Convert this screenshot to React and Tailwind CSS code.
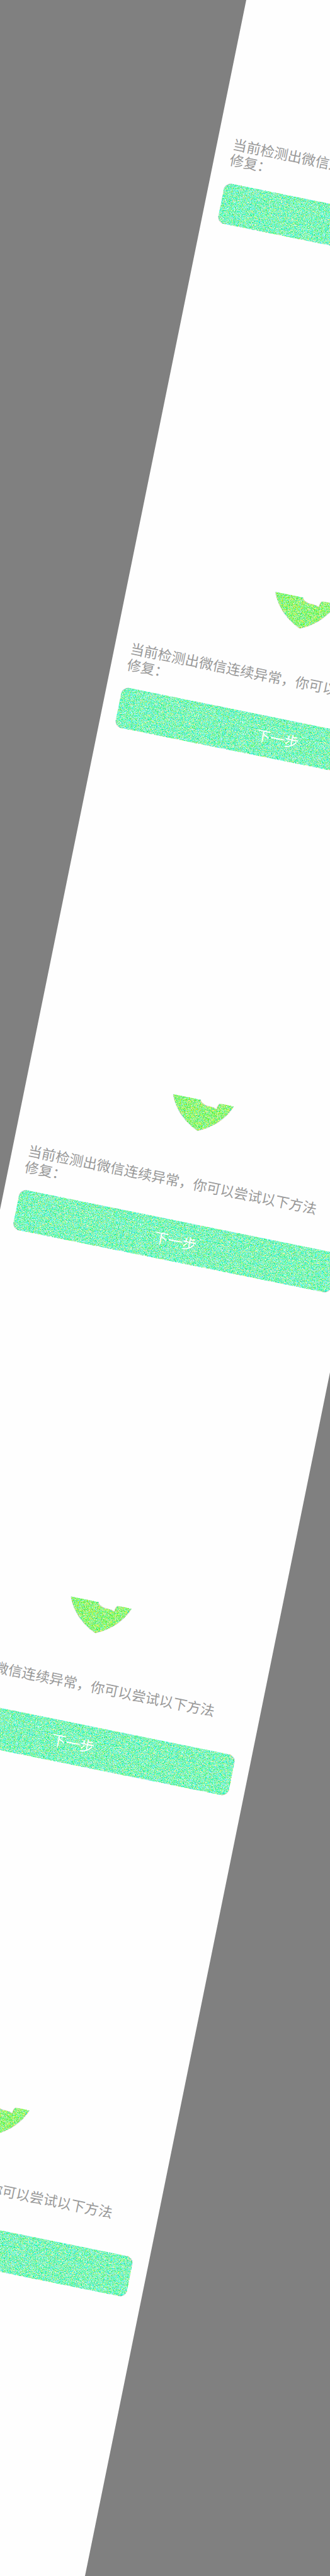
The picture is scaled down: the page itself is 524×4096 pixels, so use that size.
const BLOCK_HEIGHTS = [456.1, 818.3, 815.1, 815.1, 813.9];

function GrainFilters() {
  return (
    <svg className="absolute h-0 w-0" aria-hidden="true">
      <filter id="grain" x="0" y="0" width="1" height="1" colorInterpolationFilters="sRGB">
        <feTurbulence type="fractalNoise" baseFrequency="0.9" numOctaves="3" seed="7" />
        <feColorMatrix
          values="3.6 0 0 0 -1.3  0 0.8 0 0 0.13  0 0 2.8 0 -0.9  0 0 0 0 1"
          result="noise"
        />
        <feComposite in="SourceGraphic" in2="noise" operator="arithmetic" k2="1" k3="1" k4="-0.5" />
        <feComposite in2="SourceAlpha" operator="in" />
      </filter>
    </svg>
  );
}

function Shield() {
  return (
    <svg
      viewBox="0 0 155 78"
      className="ml-[233px] h-[49.4px] w-[98px] shrink-0 overflow-visible text-[#94f57c] filter-[url(#grain)]"
    >
      <path
        fill="currentColor"
        d="M0 0H70C72 6 76 8 82 10C88 14 95 11 103 13Q109 13 113 16L116 6Q117 1 121 0H155C145 26 123 58 78 78C32 58 10 26 0 0Z"
      />
    </svg>
  );
}

function Block({ height }) {
  return (
    <section className="flex flex-col justify-end px-[25.3px]" style={{ height }}>
      <div className="-mx-[25.3px] flex">
        <Shield />
      </div>
      <p className="mt-[70.6px] mb-[25px] text-[22.25px] leading-[25.3px] whitespace-nowrap text-[#999999]">
        当前检测出微信连续异常，你可以尝试以下方法
        <br />
        修复：
      </p>
      <button className="grid h-[65.6px] w-full shrink-0 place-items-center">
        <span className="col-start-1 row-start-1 h-full w-full rounded-[12px] bg-[#80f4c4] filter-[url(#grain)]" />
        <span className="z-10 col-start-1 row-start-1 text-[22.8px] leading-none text-white">下一步</span>
      </button>
    </section>
  );
}

export default function App() {
  return (
    <main className="relative h-[4096px] w-[524px] overflow-hidden bg-[#808080] font-['Noto_Sans_CJK_SC',sans-serif]">
      <GrainFilters />
      <div className="-mt-[100px] ml-[390.5px] h-[4500px] w-[565px] origin-[0px_100px] rotate-[11.49deg] bg-[#fefefe]">
        {BLOCK_HEIGHTS.map((height, i) => (
          <Block key={i} height={height} />
        ))}
      </div>
    </main>
  );
}
